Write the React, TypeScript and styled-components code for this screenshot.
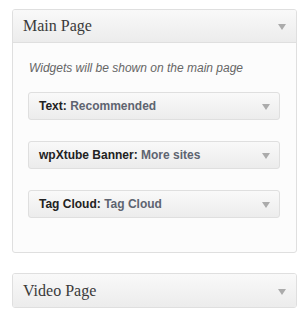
import React from 'react'
import styled, {createGlobalStyle} from 'styled-components'

const GlobalStyle = createGlobalStyle`
    body {
        margin: 0;
        background: #ffffff;
        font-family: 'Liberation Sans', Arial, sans-serif;
    }
`;

const widgets = [
    {name: 'Text', title: 'Recommended'},
    {name: 'wpXtube Banner', title: 'More sites'},
    {name: 'Tag Cloud', title: 'Tag Cloud'},
];

const App = ()=>{
  return (
    <>
        <GlobalStyle/>
        <Page>
            <Sidebar>
                <SidebarName>
                    <SidebarTitle>Main Page</SidebarTitle>
                    <Arrow/>
                </SidebarName>
                <SidebarBody>
                    <Description>Widgets will be shown on the main page</Description>
                    <WidgetList>
                        {widgets.map((w)=>(
                            <Widget key={w.name}>
                                <WidgetTitle>
                                    {w.name}: <InWidgetTitle>{w.title}</InWidgetTitle>
                                </WidgetTitle>
                                <Arrow/>
                            </Widget>
                        ))}
                    </WidgetList>
                </SidebarBody>
            </Sidebar>
            <Sidebar>
                <SidebarName $closed>
                    <SidebarTitle>Video Page</SidebarTitle>
                    <Arrow/>
                </SidebarName>
            </Sidebar>
        </Page>
    </>
  )
}

let Page = styled.div`
    padding: 9px 12px 0 12px;
    width: 285px;
    display: flex;
    flex-direction: column;
    gap: 20px;
`;
let Sidebar = styled.div`
    border: 1px solid #dfdfdf;
    border-radius: 3px;
    background: #fcfcfc;
    overflow: hidden;
`;
let SidebarName = styled.div<{$closed?: boolean}>`
    display: flex;
    align-items: center;
    justify-content: space-between;
    height: ${p => p.$closed ? '33px' : '32px'};
    padding: 0 10px 0 10px;
    background: linear-gradient(to bottom, #f9f9f9, #ececec);
    border-bottom: ${p => p.$closed ? 'none' : '1px solid #dfdfdf'};
`;
let SidebarTitle = styled.h3`
    margin: 0;
    font-family: 'Liberation Serif', Georgia, serif;
    font-weight: 400;
    font-size: 16px;
    color: #3a3a3a;
`;
let Arrow = styled.span`
    width: 0;
    height: 0;
    border-left: 4px solid transparent;
    border-right: 4px solid transparent;
    border-top: 6px solid #ababab;
    margin-top: 2px;
`;
let SidebarBody = styled.div`
    padding: 17px 16px 34px 15px;
`;
let Description = styled.p`
    margin: 0 0 15px 1px;
    font-size: 12px;
    line-height: 17px;
    font-style: italic;
    color: #666666;
`;
let WidgetList = styled.div`
    display: flex;
    flex-direction: column;
    gap: 21px;
`;
let Widget = styled.div`
    display: flex;
    align-items: center;
    justify-content: space-between;
    height: 26px;
    padding: 0 9px 0 10px;
    border: 1px solid #dfdfdf;
    border-radius: 3px;
    background: linear-gradient(to bottom, #f9f9f9, #ececec);
`;
let WidgetTitle = styled.div`
    font-size: 12px;
    font-weight: 700;
    color: #222222;
`;
let InWidgetTitle = styled.span`
    color: #5e6470;
`;

export default App
